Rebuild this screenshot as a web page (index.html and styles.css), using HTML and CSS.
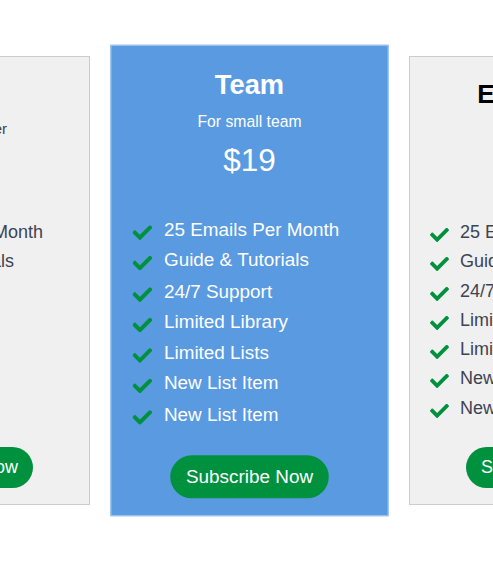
FILE: index.html
```html
<!DOCTYPE html>
<html lang="en">
<head>
<meta charset="utf-8">
<title>Pricing</title>
<link rel="stylesheet" href="styles.css">
</head>
<body>
<svg width="0" height="0" class="defs" aria-hidden="true">
  <symbol id="check" viewBox="0 72 512 375">
    <path d="M173.898 439.404l-166.4-166.4c-9.997-9.997-9.997-26.206 0-36.204l36.203-36.204c9.997-9.998 26.207-9.998 36.204 0L192 312.69 432.095 72.596c9.997-9.997 26.207-9.997 36.204 0l36.203 36.204c9.997 9.997 9.997 26.206 0 36.204l-294.4 294.401c-9.998 9.997-26.207 9.997-36.204-.001z"/>
  </symbol>
</svg>
<div class="pricing">
  <div class="card">
    <h2 class="title">Basic</h2>
    <p class="desc">For single user</p>
    <p class="price">$9</p>
    <ul class="features">
      <li><svg class="ico"><use href="#check"/></svg><span>25 Emails Per Month</span></li>
      <li><svg class="ico"><use href="#check"/></svg><span>Guide &amp; Tutorials</span></li>
      <li><svg class="ico"><use href="#check"/></svg><span>24/7 Support</span></li>
      <li><svg class="ico"><use href="#check"/></svg><span>Limited Library</span></li>
      <li><svg class="ico"><use href="#check"/></svg><span>Limited Lists</span></li>
      <li><svg class="ico"><use href="#check"/></svg><span>New List Item</span></li>
      <li><svg class="ico"><use href="#check"/></svg><span>New List Item</span></li>
    </ul>
    <a class="btn" href="#">Subscribe Now</a>
  </div>
  <div class="card featured">
    <h2 class="title">Team</h2>
    <p class="desc">For small team</p>
    <p class="price">$19</p>
    <ul class="features">
      <li><svg class="ico"><use href="#check"/></svg><span>25 Emails Per Month</span></li>
      <li><svg class="ico"><use href="#check"/></svg><span>Guide &amp; Tutorials</span></li>
      <li><svg class="ico"><use href="#check"/></svg><span>24/7 Support</span></li>
      <li><svg class="ico"><use href="#check"/></svg><span>Limited Library</span></li>
      <li><svg class="ico"><use href="#check"/></svg><span>Limited Lists</span></li>
      <li><svg class="ico"><use href="#check"/></svg><span>New List Item</span></li>
      <li><svg class="ico"><use href="#check"/></svg><span>New List Item</span></li>
    </ul>
    <a class="btn" href="#">Subscribe Now</a>
  </div>
  <div class="card">
    <h2 class="title">Enterprise</h2>
    <p class="desc">For business</p>
    <p class="price">$49</p>
    <ul class="features">
      <li><svg class="ico"><use href="#check"/></svg><span>25 Emails Per Month</span></li>
      <li><svg class="ico"><use href="#check"/></svg><span>Guide &amp; Tutorials</span></li>
      <li><svg class="ico"><use href="#check"/></svg><span>24/7 Support</span></li>
      <li><svg class="ico"><use href="#check"/></svg><span>Limited Library</span></li>
      <li><svg class="ico"><use href="#check"/></svg><span>Limited Lists</span></li>
      <li><svg class="ico"><use href="#check"/></svg><span>New List Item</span></li>
      <li><svg class="ico"><use href="#check"/></svg><span>New List Item</span></li>
    </ul>
    <a class="btn" href="#">Subscribe Now</a>
  </div>
</div>
</body>
</html>
```
FILE: styles.css
```css
html {
  overflow: hidden;
  background: #ffffff;
}
body {
  margin: 0;
  padding: 0;
  font-family: "Liberation Sans", Arial, sans-serif;
}
.defs {
  display: block;
  width: 0;
  height: 0;
  overflow: hidden;
}
.pricing {
  display: flex;
  justify-content: center;
  align-items: flex-start;
  gap: 27px;
  padding: 56px 0 40px 6px;
  width: 493px;
  box-sizing: border-box;
}
.card {
  flex: 0 0 265px;
  width: 265px;
  box-sizing: border-box;
  background: #f0f0f0;
  border: 1px solid #cccccc;
  padding: 21px 20px 16px 20px;
  display: flex;
  flex-direction: column;
  align-items: center;
  color: #3d4353;
}
.featured {
  background: #5a9ae0;
  border-color: #a9c9ef;
  color: #ffffff;
  transform: scale(1.05);
  position: relative;
  z-index: 1;
}
.title {
  margin: 0;
  font-size: 26px;
  line-height: 32px;
  font-weight: bold;
  color: #000000;
  white-space: nowrap;
}
.featured .title {
  color: #ffffff;
}
.desc {
  margin: 9px 0 0 0;
  font-size: 15px;
  line-height: 20px;
  white-space: nowrap;
}
.price {
  margin: 9px 0 0 0;
  font-size: 30px;
  line-height: 36px;
}
.features {
  list-style: none;
  margin: 34px 0 0 0;
  padding: 0;
  align-self: stretch;
}
.features li {
  display: flex;
  align-items: flex-start;
  gap: 11px;
  font-size: 18px;
  line-height: 29.3px;
  height: 29.3px;
  white-space: nowrap;
}
.ico {
  flex: 0 0 19px;
  width: 19px;
  height: 14px;
  margin-top: 10px;
  fill: #00913f;
}
.btn {
  display: block;
  margin-top: 24px;
  background: #00913f;
  color: #ffffff;
  text-decoration: none;
  font-size: 18px;
  line-height: 21px;
  padding: 10px 15px;
  border-radius: 21px;
  white-space: nowrap;
}
```
